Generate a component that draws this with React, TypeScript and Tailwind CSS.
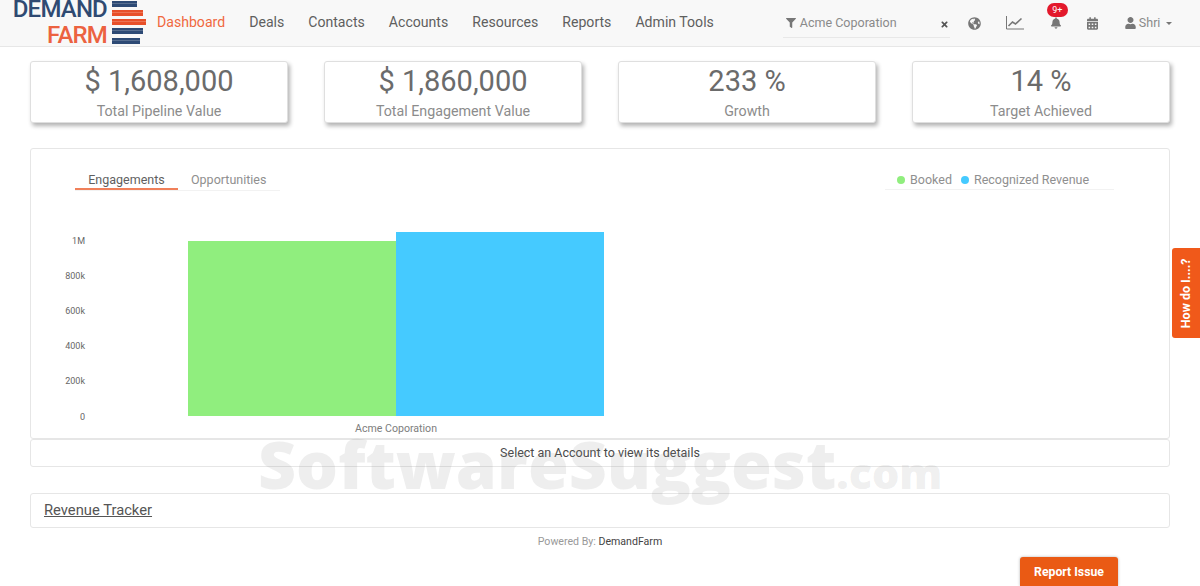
import { FaBell, FaCalendarAlt, FaFilter, FaGlobeAmericas, FaTimes, FaUser } from 'react-icons/fa';

const navItems = ['Deals', 'Contacts', 'Accounts', 'Resources', 'Reports', 'Admin Tools'];

const stats = [
  { value: '$ 1,608,000', label: 'Total Pipeline Value' },
  { value: '$ 1,860,000', label: 'Total Engagement Value' },
  { value: '233 %', label: 'Growth' },
  { value: '14 %', label: 'Target Achieved' },
];

const yTicks = [
  { label: '1M', y: 240 },
  { label: '800k', y: 275 },
  { label: '600k', y: 310 },
  { label: '400k', y: 345 },
  { label: '200k', y: 380 },
  { label: '0', y: 416 },
];

function Logo() {
  return (
    <div className="flex items-start w-[146px] h-[47px] pl-[12px] shrink-0">
      <div className="flex flex-col items-end w-[95px] font-['Roboto',sans-serif] font-medium text-[24px] leading-[19px] tracking-[-0.8px]">
        <span className="text-[#2f4a72]">DEMAND</span>
        <span className="mt-[7px] text-[#ec6240]">FARM</span>
      </div>
      <svg width="34" height="46" viewBox="0 0 34 46" className="ml-[5px] shrink-0">
        <rect x="0" y="1" width="25" height="6" fill="#2d4a75" />
        <rect x="0" y="10" width="31" height="6" fill="#e8502a" />
        <rect x="0" y="19" width="34" height="6" fill="#e8502a" />
        <rect x="0" y="28" width="31" height="6" fill="#2d4a75" />
        <rect x="0" y="38" width="28" height="6" fill="#2d4a75" />
        <path d="M0 3.5H25M0 12.5H31M0 21.5H34M0 30.5H31M0 40.5H28" stroke="#ffffff" strokeOpacity="0.25" strokeWidth="0.8" />
      </svg>
    </div>
  );
}

function Header() {
  return (
    <header className="flex items-center h-[47px] bg-[#f8f8f8] border-b border-[#e7e7e7] text-[14.1px] text-[#5f5f5f]">
      <Logo />
      <nav className="flex items-center gap-[24px] ml-[11px]">
        <span className="text-[#f0693f]">Dashboard</span>
        {navItems.map((item) => (
          <span key={item}>{item}</span>
        ))}
      </nav>
      <div className="flex items-center w-[167px] h-[29px] ml-[69px] mt-[1px] border-b border-[#e8e8e8] text-[12.5px] text-[#8a8a8a]">
        <FaFilter className="w-[10px] h-[10px] ml-[3px] -mt-[1px] text-[#777777]" />
        <span className="ml-[4px]">Acme Coporation</span>
        <FaTimes className="w-[9px] h-[9px] ml-auto mr-[1px] mt-[2px] text-[#555555]" />
      </div>
      <div className="flex items-center ml-[18px] text-[#777777]">
        <FaGlobeAmericas className="w-[13px] h-[13px]" />
        <svg width="18" height="14" viewBox="0 0 18 14" fill="none" stroke="currentColor" className="ml-[25px]">
          <path d="M0.5 0V13H18" strokeWidth="1" />
          <path d="M2.5 10L6.5 6L9.5 8L15.5 2.5" strokeWidth="1.6" />
        </svg>
        <div className="relative ml-[27px]">
          <FaBell className="w-[10px] h-[12px]" />
          <span className="absolute -top-[14px] -left-[4px] w-[21px] h-[14px] rounded-full bg-[#e3192c] text-white text-[9px] leading-[14px] text-center">9+</span>
        </div>
        <FaCalendarAlt className="w-[11px] h-[13px] ml-[26px]" />
        <FaUser className="w-[13px] h-[12px] ml-[26px]" />
        <span className="ml-[2px] text-[12.5px] text-[#8a8a8a]">Shri</span>
        <span className="ml-[6px] mt-[1px] border-x-[3px] border-x-transparent border-t-[3px] border-t-[#777777]" />
      </div>
    </header>
  );
}

function StatCard({ value, label }: { value: string; label: string }) {
  return (
    <div className="h-[62px] flex flex-col items-center bg-white border border-[#dfdfdf] rounded-[3px] shadow-[2px_3px_4px_rgba(0,0,0,0.3)]">
      <div className="text-[29px] leading-[39px] text-[#6b6b6b]">{value}</div>
      <div className="text-[14.25px] leading-[20px] text-[#8c8c8c]">{label}</div>
    </div>
  );
}

function ChartPanel() {
  return (
    <section className="h-[291px] mt-[25px] bg-white border border-[#e6e6e6] rounded-[3px]">
      <div className="flex justify-between pt-[22px] pl-[44px] pr-[55px] text-[12.5px] leading-[18px]">
        <div className="flex w-[205px] border-b border-[#f2f2f2]">
          <span className="w-[103px] h-[19px] text-center text-[#5f5f5f] border-b-2 border-[#f0805a]">Engagements</span>
          <span className="ml-[13px] text-[#8f8f8f]">Opportunities</span>
        </div>
        <div className="flex items-center w-[229px] h-[19px] pl-[12px] border-b border-[#f2f2f2] text-[#8f8f8f]">
          <span className="w-[8px] h-[8px] rounded-full bg-[#90ee7e]" />
          <span className="ml-[5px]">Booked</span>
          <span className="w-[8px] h-[8px] ml-[9px] rounded-full bg-[#45caff]" />
          <span className="ml-[5px]">Recognized Revenue</span>
        </div>
      </div>
      <svg width="1138" height="238" viewBox="31 200 1138 238" className="block mt-[9px]">
        <rect x="188" y="241" width="208" height="175" fill="#90ee7e" />
        <rect x="396" y="232" width="208" height="184" fill="#45caff" />
        {yTicks.map((t) => (
          <text key={t.label} x="85" y={t.y + 4} textAnchor="end" fontSize="9" fill="#666666">
            {t.label}
          </text>
        ))}
        <text x="396" y="432" textAnchor="middle" fontSize="10.6" fill="#7d7d7d">Acme Coporation</text>
      </svg>
    </section>
  );
}

export default function App() {
  return (
    <div className="relative w-[1200px] h-[586px] overflow-hidden bg-white font-['Roboto',sans-serif]">
      <Header />
      <main className="px-[30px] pt-[14px]">
        <div className="grid grid-cols-4 gap-[36px]">
          {stats.map((s) => (
            <StatCard key={s.label} value={s.value} label={s.label} />
          ))}
        </div>
        <ChartPanel />
        <div className="h-[28px] flex items-center justify-center bg-white border border-[#e6e6e6] rounded-[3px] text-[12.5px] text-[#4a4a4a]">
          Select an Account to view its details
        </div>
        <div className="h-[35px] mt-[26px] flex items-center pl-[13px] bg-white border border-[#e6e6e6] rounded-[3px] text-[14.75px] text-[#555555] underline">
          Revenue Tracker
        </div>
        <div className="mt-[8px] text-center text-[10.6px] leading-[12px] text-[#999999]">
          Powered By: <span className="text-[#444444]">DemandFarm</span>
        </div>
      </main>

      {/* watermark sits over everything */}
      <div className="absolute left-[258px] top-[428px] flex items-baseline font-['Open_Sans',sans-serif] font-extrabold text-[#8a8a8a]/15 pointer-events-none">
        <span className="text-[66px] leading-[70px]">SoftwareSuggest</span>
        <span className="text-[43px] leading-[70px]">.com</span>
      </div>

      <div className="absolute right-0 top-[248px] w-[28px] h-[90px] flex items-center justify-center bg-[#f0591a] rounded-l-[3px]">
        <span className="-rotate-90 whitespace-nowrap text-[12.5px] font-bold text-white">How do I....?</span>
      </div>
      <button className="absolute left-[1020px] top-[557px] w-[98px] h-[29px] pt-[2px] bg-[#ea5a14] rounded-t-[3px] text-[12.25px] font-bold text-white shadow-[0_0_3px_rgba(0,0,0,0.3)]">
        Report Issue
      </button>
    </div>
  );
}
